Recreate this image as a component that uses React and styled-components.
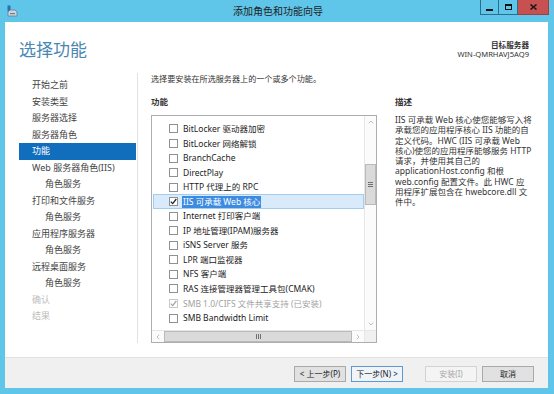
import React from "react";
import styled, { createGlobalStyle } from "styled-components";
import { ChevronUp, ChevronDown, ChevronLeft, ChevronRight } from "lucide-react";

const GlobalStyle = createGlobalStyle`
  html, body {
    margin: 0;
    padding: 0;
  }
  body {
    width: 554px;
    height: 394px;
    overflow: hidden;
    font-family: "Noto Sans", "Noto Sans CJK SC", sans-serif;
  }
`;

const Frame = styled.div`
  width: 554px;
  height: 394px;
  box-sizing: border-box;
  background: #5fc6e9;
  display: flex;
  flex-direction: column;
`;

const TitleBar = styled.div`
  height: 22px;
  flex: none;
  display: grid;
  grid-template-columns: 1fr auto 1fr;
  padding: 0 5px 0 7px;
`;

const TitleIcon = styled.div`
  display: flex;
  align-items: center;
`;

const TitleText = styled.div`
  font-size: 10px;
  line-height: 22px;
  color: #1e1e1e;
  white-space: nowrap;
`;

const WinButtons = styled.div`
  justify-self: end;
  display: flex;
  align-items: flex-start;
`;

const WinButton = styled.div`
  width: ${(p) => (p.$close ? 31 : 19)}px;
  height: 15px;
  box-sizing: border-box;
  display: flex;
  align-items: center;
  justify-content: center;
  background: ${(p) => (p.$close ? "#c75050" : "transparent")};
  border: 1px solid ${(p) => (p.$close ? "#9a4242" : "#2e6e88")};
  border-top: none;
  & + & {
    border-left: none;
  }
`;

const MinGlyph = styled.span`
  width: 7px;
  height: 2px;
  background: #111;
  margin-top: 5px;
`;

const MaxGlyph = styled.span`
  width: 7px;
  height: 6px;
  box-sizing: border-box;
  border: 1px solid #111;
  border-top-width: 2px;
`;

const Client = styled.div`
  flex: 1;
  margin: 0 6px 6px 5px;
  background: #fff;
  display: flex;
  flex-direction: column;
  min-height: 0;
`;

const Header = styled.div`
  height: 48px;
  flex: none;
  box-sizing: border-box;
  padding: 8px 19px 0 14px;
  display: flex;
  align-items: center;
  justify-content: space-between;
`;

const PageTitle = styled.h1`
  margin: 0;
  font-size: 17px;
  font-weight: 400;
  line-height: 20px;
  color: #4a87b2;
`;

const ServerInfo = styled.div`
  text-align: right;
  font-size: 7.6px;
  line-height: 9px;
  color: #333;
  & strong {
    display: block;
    font-weight: 600;
  }
`;

const Body = styled.div`
  flex: 1;
  display: flex;
  min-height: 0;
`;

const Nav = styled.nav`
  width: 133px;
  flex: none;
  box-sizing: border-box;
  margin: 3px 0 14px;
  padding: 4px 1px 0 14px;
  border-right: 1px solid #e2e2e2;
`;

const NavItem = styled.div`
  height: 16.5px;
  line-height: 16.5px;
  padding-left: ${(p) => (p.$sub ? 26 : 13)}px;
  font-size: 9px;
  white-space: nowrap;
  color: ${(p) => (p.$active ? "#fff" : p.$disabled ? "#bdbdbd" : "#444")};
  background: ${(p) => (p.$active ? "#116ebd" : "transparent")};
`;

const Main = styled.div`
  flex: 1;
  padding: 3px 0 0 13px;
  display: flex;
  flex-direction: column;
`;

const Intro = styled.div`
  font-size: 8.1px;
  line-height: 11px;
  color: #333;
  white-space: nowrap;
`;

const Columns = styled.div`
  display: flex;
  gap: 18px;
  margin-top: 12px;
`;

const Column = styled.div`
  display: flex;
  flex-direction: column;
`;

const Heading = styled.div`
  font-size: 8.5px;
  font-weight: 700;
  line-height: 12px;
  margin-bottom: 7px;
  color: #333;
`;

const ListBox = styled.div`
  width: 226px;
  height: 228px;
  box-sizing: border-box;
  border: 1px solid #acadb0;
  display: grid;
  grid-template-columns: 1fr 12px;
  grid-template-rows: 1fr 12px;
`;

const ListArea = styled.div`
  overflow: hidden;
  padding: 5.7px 0 0 1px;
`;

const Row = styled.div`
  height: 14.55px;
  box-sizing: border-box;
  display: flex;
  align-items: center;
  gap: 5px;
  padding-left: 15px;
  font-size: 8.5px;
  white-space: nowrap;
  color: ${(p) => (p.$disabled ? "#a2a2a2" : "#222")};
  background: ${(p) => (p.$selected ? "#d9ebfa" : "transparent")};
  border: 1px solid ${(p) => (p.$selected ? "#a3cdef" : "transparent")};
`;

const Label = styled.span`
  padding: 0 1px;
  line-height: 12px;
  color: ${(p) => (p.$focused ? "#fff" : "inherit")};
  background: ${(p) => (p.$focused ? "#3d8be0" : "transparent")};
  margin-left: -1px;
`;

const Box = styled.span`
  width: 9px;
  height: 9px;
  flex: none;
  box-sizing: border-box;
  border: 1px solid ${(p) => (p.$disabled ? "#c9c9c9" : "#8f9092")};
  background: #fff;
  display: flex;
  align-items: center;
  justify-content: center;
`;

const VScroll = styled.div`
  border-left: 1px solid #e6e6e6;
  display: flex;
  flex-direction: column;
  background: #fbfbfb;
`;

const HScroll = styled.div`
  border-top: 1px solid #e6e6e6;
  display: flex;
  background: #fbfbfb;
`;

const Arrow = styled.div`
  flex: none;
  width: ${(p) => (p.$horizontal ? "12px" : "auto")};
  height: ${(p) => (p.$horizontal ? "auto" : "12px")};
  display: flex;
  align-items: center;
  justify-content: center;
  color: #8a8a8a;
`;

const Track = styled.div`
  flex: 1;
  display: flex;
  flex-direction: ${(p) => (p.$horizontal ? "row" : "column")};
`;

const Thumb = styled.div`
  box-sizing: border-box;
  background: #dadada;
  border: 1px solid #bababa;
  display: flex;
  align-items: center;
  justify-content: center;
  ${(p) =>
    p.$horizontal
      ? `width: ${p.$size}px; margin-left: ${p.$offset}px; height: 100%;`
      : `height: ${p.$size}px; margin-top: ${p.$offset}px; width: 100%;`}
`;

const Grip = styled.span`
  width: ${(p) => (p.$horizontal ? 5 : 5)}px;
  height: 5px;
  background: ${(p) =>
    p.$horizontal
      ? "repeating-linear-gradient(90deg, #707070 0 1px, transparent 1px 2px)"
      : "repeating-linear-gradient(#707070 0 1px, transparent 1px 2px)"};
`;

const Corner = styled.div`
  background: #f0f0f0;
  border-top: 1px solid #e6e6e6;
  border-left: 1px solid #e6e6e6;
`;

const DescText = styled.div`
  font-size: 8.5px;
  line-height: 10.3px;
  color: #333;
  white-space: nowrap;
`;

const Footer = styled.div`
  height: 31px;
  flex: none;
  box-sizing: border-box;
  border-top: 1px solid #e2e2e2;
  background: #f0f0f0;
  display: flex;
  justify-content: flex-end;
  align-items: flex-start;
  gap: 22px;
  padding: 8px 14px 0 0;
`;

const ButtonGroup = styled.div`
  display: flex;
  gap: 5px;
`;

const Button = styled.button`
  width: 52px;
  height: 16px;
  box-sizing: border-box;
  padding: 0;
  font-family: inherit;
  font-size: 8px;
  line-height: 14px;
  white-space: nowrap;
  color: ${(p) => (p.disabled ? "#a8a8a8" : "#222")};
  background: ${(p) => (p.disabled ? "#f4f4f4" : p.$primary ? "#eef4fa" : "#e1e1e1")};
  border: 1px solid
    ${(p) => (p.disabled ? "#d3d3d3" : p.$primary ? "#5d9ad2" : "#a9a9a9")};
`;

const features = [
  { name: "BitLocker 驱动器加密" },
  { name: "BitLocker 网络解锁" },
  { name: "BranchCache" },
  { name: "DirectPlay" },
  { name: "HTTP 代理上的 RPC" },
  { name: "IIS 可承载 Web 核心", checked: true, selected: true },
  { name: "Internet 打印客户端" },
  { name: "IP 地址管理(IPAM)服务器" },
  { name: "iSNS Server 服务" },
  { name: "LPR 端口监视器" },
  { name: "NFS 客户端" },
  { name: "RAS 连接管理器管理工具包(CMAK)" },
  { name: "SMB 1.0/CIFS 文件共享支持 (已安装)", checked: true, disabled: true },
  { name: "SMB Bandwidth Limit" },
];

const steps = [
  { label: "开始之前" },
  { label: "安装类型" },
  { label: "服务器选择" },
  { label: "服务器角色" },
  { label: "功能", active: true },
  { label: "Web 服务器角色(IIS)" },
  { label: "角色服务", sub: true },
  { label: "打印和文件服务" },
  { label: "角色服务", sub: true },
  { label: "应用程序服务器" },
  { label: "角色服务", sub: true },
  { label: "远程桌面服务" },
  { label: "角色服务", sub: true },
  { label: "确认", disabled: true },
  { label: "结果", disabled: true },
];

const description = [
  "IIS 可承载 Web 核心使您能够写入将",
  "承载您的应用程序核心 IIS 功能的自",
  "定义代码。HWC (IIS 可承载 Web",
  "核心)使您的应用程序能够服务 HTTP",
  "请求，并使用其自己的",
  "applicationHost.config 和根",
  "web.config 配置文件。此 HWC 应",
  "用程序扩展包含在 hwebcore.dll 文",
  "件中。",
];

function AppIcon() {
  return (
    <svg width="11" height="12" viewBox="0 0 11 12">
      <rect x="0.5" y="0.5" width="3" height="6" fill="#2f6fb0" />
      <path d="M1 7 L3 5 H8 L10 7 V11 H1 Z" fill="#c9d6df" stroke="#6a7f8e" strokeWidth="0.8" />
      <rect x="3" y="8" width="5" height="1.2" fill="#6a7f8e" />
    </svg>
  );
}

function CheckBox({ checked, disabled }) {
  return (
    <Box $disabled={disabled}>
      {checked && (
        <svg width="7" height="7" viewBox="0 0 7 7">
          <path
            d="M0.8 3.6 L2.7 5.6 L6.3 1"
            fill="none"
            stroke={disabled ? "#a6a6a6" : "#222"}
            strokeWidth="1.3"
          />
        </svg>
      )}
    </Box>
  );
}

function FeatureList() {
  return (
    <ListBox>
      <ListArea>
        {features.map((f) => (
          <Row key={f.name} $selected={f.selected} $disabled={f.disabled}>
            <CheckBox checked={f.checked} disabled={f.disabled} />
            <Label $focused={f.selected}>{f.name}</Label>
          </Row>
        ))}
      </ListArea>
      <VScroll>
        <Arrow>
          <ChevronUp size={8} strokeWidth={1.6} />
        </Arrow>
        <Track>
          <Thumb $size={41} $offset={36}>
            <Grip />
          </Thumb>
        </Track>
        <Arrow>
          <ChevronDown size={8} strokeWidth={1.6} />
        </Arrow>
      </VScroll>
      <HScroll>
        <Arrow $horizontal>
          <ChevronLeft size={8} strokeWidth={1.6} />
        </Arrow>
        <Track $horizontal>
          <Thumb $horizontal $size={188} $offset={0}>
            <Grip $horizontal />
          </Thumb>
        </Track>
        <Arrow $horizontal>
          <ChevronRight size={8} strokeWidth={1.6} />
        </Arrow>
      </HScroll>
      <Corner />
    </ListBox>
  );
}

export default function App() {
  return (
    <>
      <GlobalStyle />
      <Frame>
        <TitleBar>
          <TitleIcon>
            <AppIcon />
          </TitleIcon>
          <TitleText>添加角色和功能向导</TitleText>
          <WinButtons>
            <WinButton>
              <MinGlyph />
            </WinButton>
            <WinButton>
              <MaxGlyph />
            </WinButton>
            <WinButton $close>
              <svg width="7" height="6" viewBox="0 0 7 6">
                <path d="M0.5 0.5 L6.5 5.5 M6.5 0.5 L0.5 5.5" stroke="#1a1a1a" strokeWidth="1.6" />
              </svg>
            </WinButton>
          </WinButtons>
        </TitleBar>
        <Client>
          <Header>
            <PageTitle>选择功能</PageTitle>
            <ServerInfo>
              <strong>目标服务器</strong>
              WIN-QMRHAVJ5AQ9
            </ServerInfo>
          </Header>
          <Body>
            <Nav>
              {steps.map((s, i) => (
                <NavItem key={i} $active={s.active} $sub={s.sub} $disabled={s.disabled}>
                  {s.label}
                </NavItem>
              ))}
            </Nav>
            <Main>
              <Intro>选择要安装在所选服务器上的一个或多个功能。</Intro>
              <Columns>
                <Column>
                  <Heading>功能</Heading>
                  <FeatureList />
                </Column>
                <Column>
                  <Heading>描述</Heading>
                  <DescText>
                    {description.map((line, i) => (
                      <div key={i}>{line}</div>
                    ))}
                  </DescText>
                </Column>
              </Columns>
            </Main>
          </Body>
          <Footer>
            <ButtonGroup>
              <Button>&lt; 上一步(P)</Button>
              <Button $primary>下一步(N) &gt;</Button>
            </ButtonGroup>
            <ButtonGroup>
              <Button disabled>安装(I)</Button>
              <Button>取消</Button>
            </ButtonGroup>
          </Footer>
        </Client>
      </Frame>
    </>
  );
}
